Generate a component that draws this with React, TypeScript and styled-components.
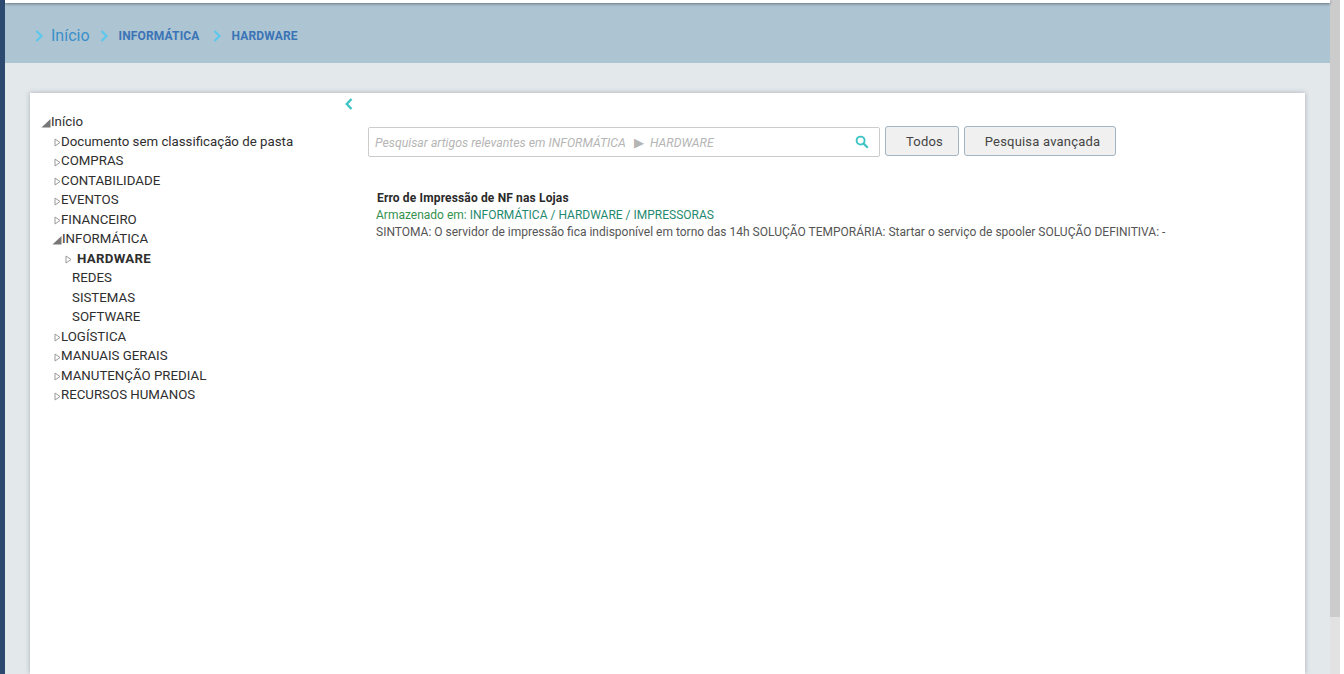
import React from "react";
import styled, { createGlobalStyle } from "styled-components";

type TreeNode = {
  label: string;
  open?: boolean;
  active?: boolean;
  children?: TreeNode[];
  leaf?: boolean;
};

const tree: TreeNode[] = [
  { label: "Documento sem classificação de pasta" },
  { label: "COMPRAS" },
  { label: "CONTABILIDADE" },
  { label: "EVENTOS" },
  { label: "FINANCEIRO" },
  {
    label: "INFORMÁTICA",
    open: true,
    children: [
      { label: "HARDWARE", active: true },
      { label: "REDES", leaf: true },
      { label: "SISTEMAS", leaf: true },
      { label: "SOFTWARE", leaf: true },
    ],
  },
  { label: "LOGÍSTICA" },
  { label: "MANUAIS GERAIS" },
  { label: "MANUTENÇÃO PREDIAL" },
  { label: "RECURSOS HUMANOS" },
];

const Chevron = () => (
  <CrumbIcon viewBox="0 0 8 12" aria-hidden="true">
    <path d="M1.5 1 L6.5 6 L1.5 11" fill="none" stroke="#5cc8ee" strokeWidth="2.2" />
  </CrumbIcon>
);

const Arrow = ({ open }: { open?: boolean }) =>
  open ? (
    <OpenArrow viewBox="0 0 10 10" aria-hidden="true">
      <path d="M9.5 1 L9.5 9.5 L0.5 9.5 Z" fill="#777" />
    </OpenArrow>
  ) : (
    <ClosedArrow viewBox="0 0 7 9" aria-hidden="true">
      <path d="M1 1 L6 4.5 L1 8 Z" fill="#fff" stroke="#999" strokeWidth="1" />
    </ClosedArrow>
  );

export default function App() {
  return (
    <>
      <GlobalStyle />
      <Page>
        <Rail />
        <Main>
          <TopStrip />
          <Crumbs>
            <Chevron />
            <CrumbHome>Início</CrumbHome>
            <Chevron />
            <CrumbLink>INFORMÁTICA</CrumbLink>
            <Chevron />
            <CrumbLink>HARDWARE</CrumbLink>
          </Crumbs>
          <Content>
            <Card>
              <TreePane>
                <RootRow>
                  <Arrow open />
                  <span>Início</span>
                </RootRow>
                {tree.map((node) => (
                  <React.Fragment key={node.label}>
                    <Row $open={node.open}>
                      <Arrow open={node.open} />
                      <span>{node.label}</span>
                    </Row>
                    {node.children?.map((child) =>
                      child.leaf ? (
                        <LeafRow key={child.label}>{child.label}</LeafRow>
                      ) : (
                        <ActiveRow key={child.label}>
                          <Arrow />
                          <span>{child.label}</span>
                        </ActiveRow>
                      ),
                    )}
                  </React.Fragment>
                ))}
              </TreePane>
              <ResultPane>
                <Collapse viewBox="0 0 8 12" aria-hidden="true">
                  <path d="M6.5 1 L1.8 6 L6.5 11" fill="none" stroke="#3dc4c4" strokeWidth="2.4" />
                </Collapse>
                <SearchBar>
                  <SearchBox>
                    <SearchText>
                      Pesquisar artigos relevantes em INFORMÁTICA<SearchSep>▶</SearchSep>HARDWARE
                    </SearchText>
                    <SearchIcon viewBox="0 0 14 14" aria-hidden="true">
                      <circle cx="5.6" cy="5.6" r="4" fill="none" stroke="#3dc4c4" strokeWidth="1.9" />
                      <path d="M8.6 8.6 L12.8 12.8" stroke="#3dc4c4" strokeWidth="2.2" />
                    </SearchIcon>
                  </SearchBox>
                  <ActionButton $width={74}>Todos</ActionButton>
                  <ActionButton $width={152}>Pesquisa avançada</ActionButton>
                </SearchBar>
                <Result>
                  <ResultTitle>Erro de Impressão de NF nas Lojas</ResultTitle>
                  <ResultPath>Armazenado em: <PathLink>INFORMÁTICA / HARDWARE / IMPRESSORAS</PathLink></ResultPath>
                  <ResultBody>
                    SINTOMA: O servidor de impressão fica indisponível em torno das 14h SOLUÇÃO TEMPORÁRIA: Startar o serviço de spooler SOLUÇÃO DEFINITIVA: -
                  </ResultBody>
                </Result>
              </ResultPane>
            </Card>
          </Content>
        </Main>
        <ScrollTrack>
          <ScrollThumb />
        </ScrollTrack>
        <WindowEdge />
      </Page>
    </>
  );
}

const GlobalStyle = createGlobalStyle`
  html, body { margin: 0; padding: 0; height: 100%; overflow: hidden; background: #fff; }
  #root { height: 100%; }
  * { box-sizing: border-box; }
  body { font-family: Roboto, "Liberation Sans", sans-serif; }
`;

const Page = styled.div`
  display: flex;
  width: 1344px;
  height: 674px;
  overflow: hidden;
`;

const Rail = styled.div`
  width: 5px;
  flex-shrink: 0;
  background: #2c4a70;
`;

const Main = styled.div`
  flex: 1;
  min-width: 0;
  display: flex;
  flex-direction: column;
  background: #e3e8eb;
`;

const TopStrip = styled.div`
  height: 3px;
  background: #fff;
  box-shadow: 0 1px 3px rgba(40, 50, 60, 0.55);
  position: relative;
  z-index: 1;
`;

const Crumbs = styled.nav`
  height: 60px;
  padding: 5px 0 0 30px;
  display: flex;
  align-items: center;
  background: #adc4d2;
`;

const CrumbIcon = styled.svg`
  width: 8px;
  height: 12px;
  flex-shrink: 0;
`;

const CrumbHome = styled.span`
  margin: 0 10px 0 8px;
  font-size: 16px;
  color: #3a8fc8;
`;

const CrumbLink = styled.span`
  margin: 0 13px 0 11px;
  font-size: 12px;
  font-weight: 700;
  letter-spacing: 0.15px;
  color: #3a74b6;
`;

const Content = styled.main`
  flex: 1;
  min-height: 0;
  padding: 30px 25px 0;
  display: flex;
`;

const Card = styled.section`
  flex: 1;
  display: flex;
  background: #fff;
  box-shadow: 0 0 5px rgba(60, 70, 80, 0.35);
`;

const TreePane = styled.div`
  width: 314px;
  flex-shrink: 0;
  padding: 19px 0 0 11px;
  font-size: 13.28px;
  line-height: 19.5px;
  color: #2e2e2e;
`;

const OpenArrow = styled.svg`
  width: 10px;
  height: 10px;
  flex-shrink: 0;
  margin-top: 2px;
`;

const ClosedArrow = styled.svg`
  width: 7px;
  height: 9px;
  flex-shrink: 0;
  margin-top: 3px;
`;

const RootRow = styled.div`
  display: flex;
  align-items: center;
  height: 19.5px;
  white-space: nowrap;
`;

const Row = styled(RootRow)<{ $open?: boolean }>`
  padding-left: ${(p) => (p.$open ? "11px" : "13px")};
`;

const ActiveRow = styled(RootRow)`
  padding-left: 24px;
  gap: 5px;
  font-weight: 700;
  letter-spacing: 0.3px;
`;

const LeafRow = styled(RootRow)`
  padding-left: 31px;
`;

const ResultPane = styled.div`
  flex: 1;
  min-width: 0;
  padding: 5px 0 0 0;
`;

const Collapse = styled.svg`
  display: block;
  width: 8px;
  height: 12px;
  margin-left: 1px;
`;

const SearchBar = styled.div`
  display: flex;
  align-items: flex-start;
  margin: 16px 0 0 24px;
`;

const SearchBox = styled.div`
  width: 512px;
  height: 30px;
  margin-top: 1px;
  padding: 0 10px 0 6px;
  display: flex;
  align-items: center;
  justify-content: space-between;
  background: #fff;
  border: 1px solid #ccc;
  border-radius: 2px;
`;

const SearchText = styled.span`
  padding-top: 1px;
  font-size: 12.3px;
  font-style: italic;
  color: #b5b5b5;
  white-space: nowrap;
`;

const SearchSep = styled.span`
  margin: 0 6px 0 8px;
  font-style: normal;
  font-size: 13px;
`;

const SearchIcon = styled.svg`
  width: 14px;
  height: 14px;
`;

const ActionButton = styled.button<{ $width: number }>`
  width: ${(p) => p.$width}px;
  height: 30px;
  margin-left: 5px;
  padding: 0 0 0 5px;
  background: #f0f0f0;
  border: 1px solid #a3b4c2;
  border-radius: 3px;
  font-family: inherit;
  font-size: 13px;
  letter-spacing: 0.2px;
  color: #444;
`;

const Result = styled.article`
  margin: 33px 0 0 32px;
  font-size: 12px;
  line-height: 17px;
`;

const ResultTitle = styled.div`
  padding-left: 1px;
  font-weight: 700;
  letter-spacing: 0.15px;
  color: #2a2a2a;
`;

const ResultPath = styled.div`
  color: #35914f;
`;

const PathLink = styled.span`
  color: #1f8a70;
`;

const ResultBody = styled.div`
  color: #555;
  white-space: nowrap;
`;

const ScrollTrack = styled.div`
  width: 10px;
  flex-shrink: 0;
  background: #e2e2e2;
`;

const ScrollThumb = styled.div`
  height: 617px;
  background: #cccccc;
`;

const WindowEdge = styled.div`
  width: 4px;
  flex-shrink: 0;
  background: #fff;
`;
